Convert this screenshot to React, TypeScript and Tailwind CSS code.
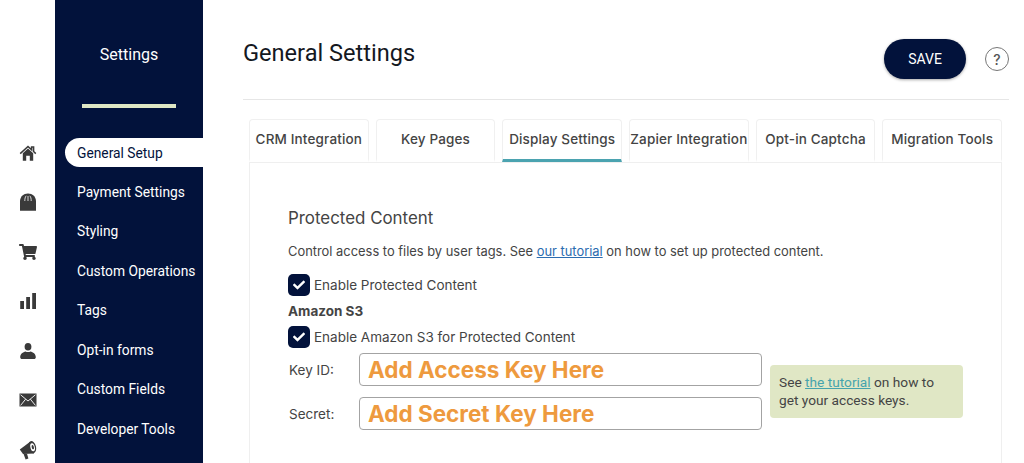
import { FaShoppingCart, FaCheck } from "react-icons/fa";

const iconClass = "w-[18px] h-[18px]";

const railIcons = [
  <svg key="home" viewBox="0 0 18 18" className={iconClass} fill="currentColor">
    <path d="M3.8 9.2 L9 4.6 L14.2 9.2 V16.8 H10.8 V11.8 H7.2 V16.8 H3.8 Z" />
    <path d="M1.2 9.6 L9 2.4 L12.6 5.7 V3 H14.6 V7.5 L16.8 9.6" fill="none" stroke="currentColor" strokeWidth="1.5" />
  </svg>,
  <svg key="store" viewBox="0 0 18 18" className={iconClass} fill="currentColor">
    <path d="M1 8 C1.4 3.4 4.4 0.5 9 0.5 C13.6 0.5 16.6 3.4 17 8 V17.8 H1 Z" />
    <path d="M5.8 8 C5.8 5.6 6.2 4 7.2 2.8 M12.2 8 C12.2 5.6 11.8 4 10.8 2.8 M9 8 V3" fill="none" stroke="#fff" strokeWidth="0.8" />
  </svg>,
  <FaShoppingCart key="cart" className={iconClass} />,
  <svg key="bars" viewBox="0 0 18 18" className={iconClass} fill="currentColor">
    <rect x="1.2" y="9" width="3.8" height="8" />
    <rect x="7.2" y="5" width="3.8" height="12" />
    <rect x="13.2" y="1" width="3.8" height="16" />
  </svg>,
  <svg key="user" viewBox="0 0 18 18" className={iconClass} fill="currentColor">
    <ellipse cx="9" cy="4.8" rx="3.4" ry="3.8" />
    <path d="M1.2 15 C1.2 11.6 4 10.2 6.6 9.4 C7.6 10.2 10.4 10.2 11.4 9.4 C14 10.2 16.8 11.6 16.8 15 C16.8 16.4 16 17 15 17 H3 C2 17 1.2 16.4 1.2 15 Z" />
  </svg>,
  <svg key="mail" viewBox="0 0 18 18" className={iconClass} fill="currentColor">
    <rect x="0.5" y="2.5" width="17" height="13" />
    <path d="M1.6 3.8 L9 10 L16.4 3.8 M1.6 14.4 L6.6 8.2 M16.4 14.4 L11.4 8.2" fill="none" stroke="#fff" strokeWidth="0.9" />
  </svg>,
  <svg key="horn" viewBox="0 0 18 20" className="w-[18px] h-[20px]" fill="currentColor">
    <path d="M0.8 9.6 L11.5 1.5 L15 13.5 L4 14 Z" />
    <path d="M4.6 14 L8 13.8 L9.4 18.4 L6.6 19.4 Z" />
    <ellipse cx="13.2" cy="7.2" rx="3.8" ry="6.2" transform="rotate(-14 13.2 7.2)" />
    <ellipse cx="13.6" cy="7.2" rx="2.2" ry="4.1" transform="rotate(-14 13.6 7.2)" fill="#fff" />
    <ellipse cx="13.8" cy="7.2" rx="1.1" ry="2.2" transform="rotate(-14 13.8 7.2)" />
  </svg>,
];

const menu = ["Payment Settings", "Styling", "Custom Operations", "Tags", "Opt-in forms", "Custom Fields", "Developer Tools"];

const tabs = ["CRM Integration", "Key Pages", "Display Settings", "Zapier Integration", "Opt-in Captcha", "Migration Tools"];

function Check({ label }: { label: string }) {
  return (
    <div className="flex items-center gap-[4px] h-[22px] text-[13.5px]">
      <span className="w-[22px] h-[22px] rounded-[5px] bg-[#02123b] flex items-center justify-center text-white">
        <FaCheck className="w-[12px] h-[12px]" />
      </span>
      <span>{label}</span>
    </div>
  );
}

function KeyRow({ label, value }: { label: string; value: string }) {
  return (
    <div className="flex items-center h-[33px]">
      <span className="w-[71px] pl-px pt-px text-[13.5px] text-[#444]">{label}</span>
      <div className="w-[403px] h-[33px] border border-[#a3a3a3] rounded-[4px] pl-[8px] flex items-center text-[22.5px] font-bold text-[#ee9a3e] bg-white">
        {value}
      </div>
    </div>
  );
}

export default function App() {
  return (
    <div className="w-[1024px] h-[463px] overflow-hidden flex bg-white font-['Inter',sans-serif] text-[#444]">
      <aside className="w-[55px] shrink-0 pt-[144px] flex flex-col items-center gap-[31.4px] text-[#3a3a3a]">
        {railIcons}
      </aside>

      <nav className="w-[148px] shrink-0 bg-[#02123b] text-white font-['Roboto',sans-serif] flex flex-col">
        <h2 className="text-[16px] text-center mt-[44px] leading-[21px]">Settings</h2>
        <div className="w-[94px] h-[4px] bg-[#dfe7c4] mx-auto mt-[39px]" />
        <ul className="mt-[30px] flex flex-col gap-[10px] text-[13.8px]">
          <li className="ml-[10px] h-[29px] rounded-l-full bg-white text-[#02123b] pl-[12px] pt-px flex items-center">General Setup</li>
          {menu.map((m) => (
            <li key={m} className="pl-[22px] pt-[1px] h-[29.5px] flex items-center whitespace-nowrap">{m}</li>
          ))}
        </ul>
      </nav>

      <main className="flex-1 min-w-0 pl-[40px] pr-[15px]">
        <header className="h-[100px] border-b border-[#e6e6e6] flex items-start justify-between">
          <h1 className="text-[23.6px] mt-[37px] leading-[32px] text-[#14181f] font-['Roboto',sans-serif]">General Settings</h1>
          <div className="flex items-center gap-[19px] mt-[39px]">
            <button className="w-[82px] h-[40px] rounded-full bg-[#02123b] text-white text-[14px] shadow-[0_1px_3px_rgba(0,0,0,0.35)] font-['Roboto',sans-serif]">SAVE</button>
            <span className="w-[24px] h-[24px] rounded-full border border-[#777] flex items-center justify-center text-[14px] font-medium text-[#555]">?</span>
          </div>
        </header>

        <div className="ml-[6px] mr-[7px] mt-[19px] flex gap-[7px]">
          {tabs.map((t, i) => (
            <div
              key={t}
              className={`flex-1 min-w-0 h-[43px] rounded-t-[4px] border-x border-t border-[#f0f0f0] border-b-[3px] flex items-center justify-center text-[13.5px] font-[450] whitespace-nowrap tracking-[0.15px] ${i === 2 ? "border-b-[#4ba3b0]" : "border-b-transparent"}`}
            >
              {t}
            </div>
          ))}
        </div>

        <section className="ml-[6px] mr-[7px] h-[301px] border-x border-t border-[#efefef] pl-[38px]">
          <h3 className="text-[16.9px] mt-[43px] leading-[24px]">Protected Content</h3>
          <p className="mt-[12px] leading-[20px] text-[12.9px]">
            Control access to files by user tags. See <a className="text-[#2b6cb0] underline">our tutorial</a> on how to set up protected content.
          </p>
          <div className="mt-[12px]">
            <Check label="Enable Protected Content" />
          </div>
          <div className="font-bold text-[13.5px] mt-[5px] leading-[20px]">Amazon S3</div>
          <div className="mt-[5px]">
            <Check label="Enable Amazon S3 for Protected Content" />
          </div>
          <div className="flex mt-[5px]">
            <div className="flex flex-col gap-[11px]">
              <KeyRow label="Key ID:" value="Add Access Key Here" />
              <KeyRow label="Secret:" value="Add Secret Key Here" />
            </div>
            <div className="ml-[8px] mt-[12px] w-[193px] h-[53px] rounded-[4px] bg-[#e0e7c5] px-[9px] pb-[2px] flex items-center font-['Roboto',sans-serif] text-[13.7px] leading-[18px] text-[#444]">
              <p>
                See <a className="text-[#46a3ad] underline">the tutorial</a> on how to get your access keys.
              </p>
            </div>
          </div>
        </section>
      </main>
    </div>
  );
}
